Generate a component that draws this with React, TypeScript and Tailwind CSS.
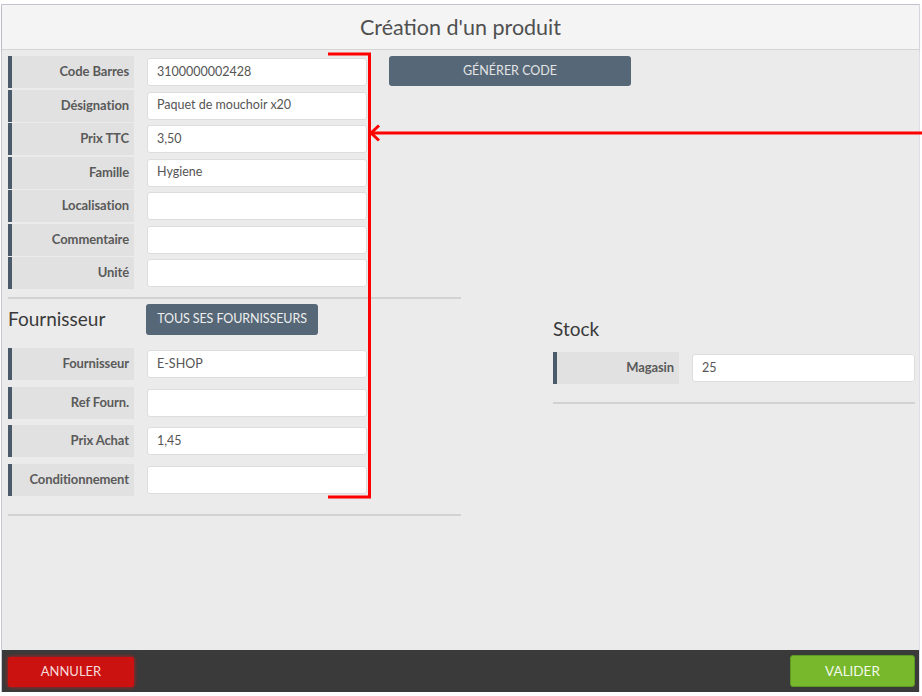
import React from "react";

const FONT = { fontFamily: 'Lato, "Liberation Sans", sans-serif' };

type FieldProps = { label: string; value?: string; inputWidth?: string };

function Field({ label, value = "", inputWidth = "w-[220px]" }: FieldProps) {
  return (
    <div className="flex h-[32px] items-center">
      <div className="flex h-[32px] w-[126px] shrink-0">
        <div className="w-[4px] bg-[#4a5a6a]" />
        <div className="flex flex-1 items-center justify-end bg-[#e1e1e1] pr-[5px] text-[13px] font-bold tracking-[-0.1px] text-[#5a5a5a]">
          {label}
        </div>
      </div>
      <div
        className={`ml-[13px] flex h-[28px] ${inputWidth} items-center rounded-[3px] border border-[#dddddd] bg-white px-[9px] text-[12.5px] text-[#555]`}
      >
        {value}
      </div>
    </div>
  );
}

const PRODUCT_FIELDS = [
  { label: "Code Barres", value: "3100000002428" },
  { label: "Désignation", value: "Paquet de mouchoir x20" },
  { label: "Prix TTC", value: "3,50" },
  { label: "Famille", value: "Hygiene" },
  { label: "Localisation" },
  { label: "Commentaire" },
  { label: "Unité" },
];

const SUPPLIER_FIELDS = [
  { label: "Fournisseur", value: "E-SHOP" },
  { label: "Ref Fourn." },
  { label: "Prix Achat", value: "1,45" },
  { label: "Conditionnement" },
];

export default function App() {
  return (
    <div className="relative h-[696px] w-[922px] overflow-hidden bg-white" style={FONT}>
      <div className="ml-[1px] mr-[2px] mt-[4px] flex h-[688px] flex-col border-l border-r border-t border-l-[#c6c6d4] border-r-[#dedee6] border-t-[#c6c6d4]">
        {/* header */}
        <div className="flex h-[45px] shrink-0 items-center justify-center border-b border-[#d4d4d4] bg-[#f4f4f4] shadow-[0_1px_3px_rgba(0,0,0,0.12)]">
          <h1 className="text-[21.5px] text-[#505050]">Création d'un produit</h1>
        </div>

        {/* body */}
        <div className="flex-1 bg-[#ebebeb] pl-[6px] pr-[4px] pt-[6px]">
          <div className="flex items-start">
            <div className="flex flex-col gap-[1.5px]">
              {PRODUCT_FIELDS.map((f) => (
                <Field key={f.label} label={f.label} value={f.value} />
              ))}
            </div>
            <button className="ml-[22px] h-[30px] w-[242px] rounded-[3px] bg-[#566777] text-[12.5px] text-[#e4e4e4]">
              GÉNÉRER CODE
            </button>
          </div>

          <div className="mt-[8px] flex items-start">
            <div className="w-[453px]">
              <div className="h-[2px] bg-[#d2d2d2]" />
              <div className="mt-[5px] flex h-[31px] items-center">
                <h2 className="w-[138px] text-[19px] text-[#3a3a3a]">Fournisseur</h2>
                <button className="h-[31px] w-[172px] rounded-[3px] bg-[#566777] text-[12.5px] tracking-[-0.1px] text-[#eeeeee]">
                  TOUS SES FOURNISSEURS
                </button>
              </div>
              <div className="mt-[13px] flex flex-col gap-[6.5px]">
                {SUPPLIER_FIELDS.map((f) => (
                  <Field key={f.label} label={f.label} value={f.value} />
                ))}
              </div>
              <div className="mt-[18px] h-[2px] bg-[#d2d2d2]" />
            </div>

            <div className="ml-[92px] w-[362px] pt-[20px]">
              <h2 className="text-[19px] leading-[23px] text-[#3a3a3a]">Stock</h2>
              <div className="mt-[12px]">
                <Field label="Magasin" value="25" inputWidth="w-[223px]" />
              </div>
              <div className="mt-[18px] h-[2px] bg-[#d2d2d2]" />
            </div>
          </div>
        </div>

        {/* footer */}
        <div className="flex h-[42px] shrink-0 items-center justify-between bg-[#3a3a3a] pl-[6px] pr-[4px]">
          <button className="mt-[2px] h-[30px] w-[126px] rounded-[2px] bg-[#cc1111] text-[13px] text-[#f6dada] shadow-[0_0_4px_rgba(230,20,20,0.8)]">
            ANNULER
          </button>
          <button className="h-[32px] w-[125px] rounded-[3px] border border-[#5d9a22] bg-[#78b82c] text-[13.5px] text-[#f2f8ea]">
            VALIDER
          </button>
        </div>
      </div>

      {/* red annotation */}
      <svg
        className="pointer-events-none absolute left-0 top-0"
        width="922"
        height="696"
        viewBox="0 0 922 696"
      >
        <path d="M328 54 H369.5 V497 H328" fill="none" stroke="#ff0000" strokeWidth="3" />
        <path d="M922 133 H372" fill="none" stroke="#ff0000" strokeWidth="3" />
        <path d="M379 125.5 L371 133 L379 140.5" fill="none" stroke="#ff0000" strokeWidth="3" />
      </svg>
    </div>
  );
}
